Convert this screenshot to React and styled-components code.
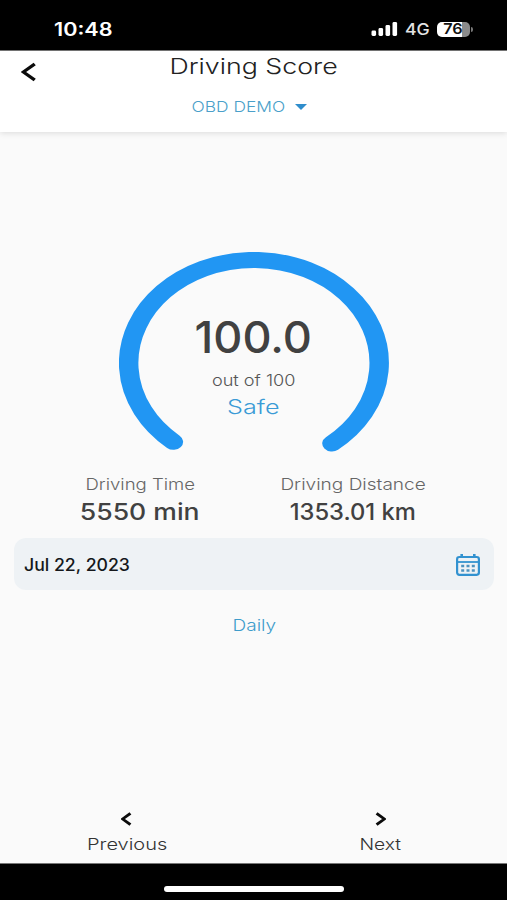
import styled, { createGlobalStyle } from 'styled-components';

const stats = [
  { label: 'Driving Time', value: '5550 min', labelScale: 1.16, valueScale: 1.18 },
  { label: 'Driving Distance', value: '1353.01 km', labelScale: 1.19, valueScale: 1.055 },
];

const Chevron = ({ width, height, stroke = 3, flip }) => (
  <svg width={width} height={height} viewBox="0 0 14 20" preserveAspectRatio="none" fill="none">
    <path d={flip ? 'M2 2L12 10L2 18' : 'M12 2L2 10L12 18'} stroke="#0b0b0b" strokeWidth={stroke} />
  </svg>
);

const SignalIcon = () => (
  <svg width="27" height="14" viewBox="0 0 27 14" fill="#fff">
    <rect x="0.5" y="8.5" width="4.6" height="5.5" rx="1.4" />
    <rect x="7.5" y="6" width="4.6" height="8" rx="1.4" />
    <rect x="14.5" y="3" width="4.6" height="11" rx="1.4" />
    <rect x="21.5" y="0" width="4.6" height="14" rx="1.4" />
  </svg>
);

const CalendarIcon = () => (
  <svg width="24" height="22" viewBox="0 0 24 22" fill="none">
    <rect x="1.1" y="3" width="21.8" height="17.8" rx="2.2" stroke="#3292d0" strokeWidth="2.2" />
    <path d="M1 8H23" stroke="#3292d0" strokeWidth="1.8" />
    <path d="M5.7 0V4M18.3 0V4" stroke="#3292d0" strokeWidth="2.6" />
    <path
      d="M5.2 12H8.2M10.5 12H13.5M15.8 12H18.8M5.2 16.5H8.2M10.5 16.5H13.5M15.8 16.5H18.8"
      stroke="#4c92bf"
      strokeWidth="2.6"
    />
  </svg>
);

const App = () => {
  return (
    <Screen>
      <GlobalStyle />
      <StatusBar>
        <Clock>
          <Text size={18} weight={600} scale={1.2} color="#fff" origin="left">10:48</Text>
        </Clock>
        <StatusIcons>
          <SignalIcon />
          <Network>
            <Text size={16} weight={500} scale={1.1} color="#e4e4e4" origin="left">4G</Text>
          </Network>
          <Battery>
            <BatteryBody>
              <Text size={15} weight={600} scale={1.08} color="#111">76</Text>
            </BatteryBody>
            <BatteryTip />
          </Battery>
        </StatusIcons>
      </StatusBar>

      <Header>
        <BackButton>
          <Chevron width={16} height={20} />
        </BackButton>
        <Title>
          <Text size={21.5} weight={300} scale={1.245} color="#222">Driving Score</Text>
        </Title>
        <Device>
          <Text size={15} weight={300} scale={1.16} color="#4a9fca">OBD DEMO</Text>
          <svg width="12" height="6" viewBox="0 0 12 6">
            <path d="M0 0H12L6 6Z" fill="#2f8dcc" />
          </svg>
        </Device>
      </Header>

      <Content>
        <Gauge>
          <GaugeArc viewBox="0 0 222 202" preserveAspectRatio="none">
            <path
              d="M44.7 189.8A103 103 0 1 1 175.1 191.5"
              fill="none"
              stroke="#2196f3"
              strokeWidth="16"
              strokeLinecap="round"
            />
          </GaugeArc>
          <GaugeLabel>
            <Score>
              <Text size={44} weight={500} scale={1.025} color="#414141">100.0</Text>
            </Score>
            <OutOf>
              <Text size={15.5} weight={300} scale={1.17} color="#555">out of 100</Text>
            </OutOf>
            <Text size={19.5} weight={300} scale={1.29} color="#3a9bd6">Safe</Text>
          </GaugeLabel>
        </Gauge>

        <Stats>
          {stats.map((stat) => (
            <Stat key={stat.label}>
              <Text size={16} weight={300} scale={stat.labelScale} color="#666">{stat.label}</Text>
              <Text size={22.5} weight={500} scale={stat.valueScale} color="#414141">{stat.value}</Text>
            </Stat>
          ))}
        </Stats>

        <DateField>
          <Text size={17} weight={500} scale={1.04} color="#15181b" origin="left">Jul 22, 2023</Text>
          <CalendarIcon />
        </DateField>

        <Period>
          <Text size={16} weight={300} scale={1.19} color="#3f9ccb">Daily</Text>
        </Period>
      </Content>

      <Pager>
        <PageButton>
          <Chevron width={11} height={14} stroke={3.8} />
          <Text size={16} weight={300} scale={1.25} color="#333">Previous</Text>
        </PageButton>
        <PageButton>
          <Chevron width={11} height={14} stroke={3.8} flip />
          <Text size={16} weight={300} scale={1.2} color="#333">Next</Text>
        </PageButton>
      </Pager>

      <HomeArea>
        <HomeIndicator />
      </HomeArea>
    </Screen>
  );
};

const GlobalStyle = createGlobalStyle`
  body {
    margin: 0;
    background: #fafafa;
  }

  * {
    box-sizing: border-box;
  }

  svg {
    display: block;
    flex: none;
  }
`;

// All labels are drawn a bit wider than the font itself
const Text = styled.span.withConfig({
  shouldForwardProp: (prop) => !['size', 'weight', 'scale', 'color', 'origin'].includes(prop),
})`
  display: block;
  font-family: Inter, 'Open Sans', sans-serif;
  font-size: ${(p) => p.size}px;
  font-weight: ${(p) => p.weight};
  line-height: 28px;
  white-space: nowrap;
  color: ${(p) => p.color};
  transform: scaleX(${(p) => p.scale});
  transform-origin: ${(p) => p.origin || 'center'};
`;

const Screen = styled.div`
  display: flex;
  flex-direction: column;
  width: 507px;
  height: 900px;
  overflow: hidden;
  background: #fafafa;
`;

const StatusBar = styled.div`
  display: flex;
  justify-content: space-between;
  flex: none;
  height: 51px;
  padding: 15px 34px 0 54px;
  background: #000;
  border-bottom: 1px solid #777;
`;

const Clock = styled.div`
  padding-top: 1px;
`;

const StatusIcons = styled.div`
  display: flex;
  align-items: center;
  height: 28px;
`;

const Network = styled.div`
  width: 26px;
  margin: 0 6px 0 7px;
`;

const Battery = styled.div`
  display: flex;
  align-items: center;
  gap: 1px;
`;

const BatteryBody = styled.div`
  display: flex;
  align-items: center;
  justify-content: center;
  width: 33px;
  height: 15px;
  border-radius: 5px;
  background: linear-gradient(90deg, #fff 77%, #8b8b8b 77%);
`;

const BatteryTip = styled.div`
  width: 2px;
  height: 5px;
  border-radius: 0 2px 2px 0;
  background: #777;
`;

const Header = styled.header`
  display: grid;
  grid-template-columns: 60px 1fr 60px;
  grid-template-rows: 40px 41px;
  flex: none;
  height: 81px;
  background: #fff;
  box-shadow: 0 1px 6px rgba(0, 0, 0, 0.13);
`;

const BackButton = styled.div`
  padding: 11px 0 0 21px;
`;

const Title = styled.div`
  display: flex;
  justify-content: center;
  padding-top: 1px;
`;

const Device = styled.div`
  display: flex;
  grid-column: 1 / -1;
  align-items: flex-start;
  justify-content: center;
  gap: 17px;
  padding-top: 2px;
  padding-right: 2px;

  svg {
    margin-top: 11px;
  }
`;

const Content = styled.main`
  flex: 1;
  padding: 120px 13px 0 14px;
`;

const Gauge = styled.div`
  display: grid;
  width: 270px;
  height: 201px;
  margin-left: 105px;
`;

const GaugeArc = styled.svg`
  grid-area: 1 / 1;
  width: 270px;
  height: 202px;
`;

const GaugeLabel = styled.div`
  grid-area: 1 / 1;
  display: flex;
  flex-direction: column;
  align-items: center;
  padding: 71px 1px 0 0;
`;

const Score = styled.div`
  height: 44px;
`;

const OutOf = styled.div`
  height: 26px;
`;

const Stats = styled.div`
  display: grid;
  grid-template-columns: 252px 174px;
  margin-top: 17px;
`;

const Stat = styled.div`
  display: flex;
  flex-direction: column;
  align-items: center;
`;

const DateField = styled.div`
  display: flex;
  align-items: center;
  justify-content: space-between;
  height: 52px;
  margin-top: 12px;
  padding: 1px 14px 0 10px;
  border-radius: 12px;
  background: #eef2f5;
`;

const Period = styled.div`
  display: flex;
  justify-content: center;
  padding-top: 21px;
`;

const Pager = styled.nav`
  display: grid;
  grid-template-columns: 1fr 1fr;
  flex: none;
  height: 51px;
`;

const PageButton = styled.div`
  display: flex;
  flex-direction: column;
  align-items: center;
  gap: 4px;
`;

const HomeArea = styled.div`
  display: flex;
  justify-content: center;
  flex: none;
  height: 37px;
  padding-top: 22px;
  background: #000;
  border-top: 1px solid #777;
`;

const HomeIndicator = styled.div`
  width: 180px;
  height: 6px;
  border-radius: 3px;
  background: #fff;
`;

export default App;
